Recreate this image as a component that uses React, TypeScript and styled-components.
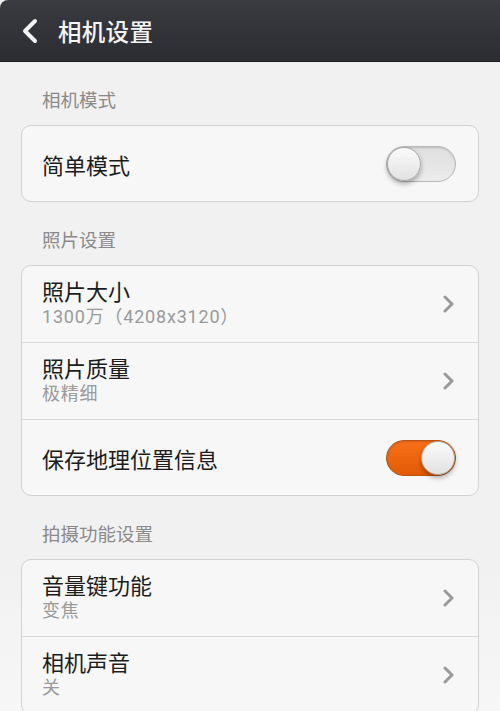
import React from "react";
import styled, { createGlobalStyle } from "styled-components";

const Global = createGlobalStyle`
  html, body { margin: 0; padding: 0; background: #f1f1f1; }
  body { font-family: "Noto Sans CJK SC", "Noto Sans", sans-serif; }
  * { box-sizing: border-box; }
`;

const Page = styled.div`
  width: 500px;
  height: 711px;
  overflow: hidden;
  background: linear-gradient(#f1f1f1 0%, #f1f1f1 80%, #f7f7f7 100%);
  display: flex;
  flex-direction: column;
`;

const Header = styled.div`
  height: 62px;
  flex: none;
  display: flex;
  align-items: center;
  gap: 18px;
  padding-left: 20px;
  background: linear-gradient(#3a3b41, #2c2d32);
  border-top-left-radius: 8px;
  border-bottom: 1px solid #1c1c1f;
`;

const Title = styled.div`
  color: #f4f4f4;
  font-size: 23.5px;
  font-weight: 500;
  letter-spacing: 0.3px;
`;

const Content = styled.div`
  display: flex;
  flex-direction: column;
  padding: 0 21px;
`;

const SectionLabel = styled.div`
  color: #8a8a8a;
  font-size: 18.5px;
  height: 63px;
  padding: 25px 0 0 21px;
  line-height: 24px;
`;

const Card = styled.div`
  background: #f7f7f7;
  border: 1px solid #d2d2d2;
  border-radius: 10px;
  display: flex;
  flex-direction: column;
`;

const Row = styled.div<{ $last?: boolean; $h?: number }>`
  height: ${(p) => p.$h ?? 77}px;
  display: flex;
  align-items: center;
  justify-content: space-between;
  padding: 0 20px 0 20px;
  border-bottom: ${(p) => (p.$last ? "none" : "1px solid #dadada")};
`;

const Texts = styled.div`
  display: flex;
  flex-direction: column;
  margin-top: -2px;
`;

const RowTitle = styled.div`
  color: #1c1c1c;
  font-size: 22px;
  line-height: 28px;
`;

const RowSub = styled.div`
  color: #9a9a9a;
  font-family: Roboto, "Noto Sans CJK SC", sans-serif;
  font-size: 18px;
  line-height: 26px;
  letter-spacing: 0.8px;
`;

const Track = styled.div<{ $on?: boolean }>`
  width: 70px;
  height: 36px;
  border-radius: 18px;
  position: relative;
  margin-right: 2px;
  background: ${(p) =>
    p.$on ? "linear-gradient(#f8701a, #e25a05)" : "linear-gradient(#dedede, #ececec)"};
  border: 1px solid ${(p) => (p.$on ? "#b9540e" : "#b8b8b8")};
  box-shadow: inset 0 1px 2px rgba(0, 0, 0, 0.15);
`;

const Knob = styled.div<{ $on?: boolean }>`
  position: absolute;
  top: 0px;
  ${(p) => (p.$on ? "right: 0px;" : "left: 0px;")}
  width: 34px;
  height: 34px;
  border-radius: 50%;
  background: linear-gradient(#fafafa, #e2e2e2);
  border: 1px solid #a8a8a8;
  box-shadow: 0 3px 5px rgba(0, 0, 0, 0.3);
`;

const Chevron = () => (
  <svg width="14" height="18" viewBox="0 0 14 18" style={{ marginRight: 2 }}>
    <path d="M3 2 L10 9 L3 16" fill="none" stroke="#9a9a9a" strokeWidth="3" strokeLinecap="round" strokeLinejoin="round" />
  </svg>
);

const Back = () => (
  <svg width="20" height="26" viewBox="0 0 20 26">
    <path d="M15 3 L5 13 L15 23" fill="none" stroke="#f2f2f2" strokeWidth="4" strokeLinecap="round" strokeLinejoin="round" />
  </svg>
);

const Switch = ({ on }: { on?: boolean }) => (
  <Track $on={on}>
    <Knob $on={on} />
  </Track>
);

export default function App() {
  return (
    <Page>
      <Global />
      <Header>
        <Back />
        <Title>相机设置</Title>
      </Header>
      <Content>
        <SectionLabel>相机模式</SectionLabel>
        <Card>
          <Row $last $h={75}>
            <RowTitle>简单模式</RowTitle>
            <Switch />
          </Row>
        </Card>
        <SectionLabel>照片设置</SectionLabel>
        <Card>
          <Row>
            <Texts>
              <RowTitle>照片大小</RowTitle>
              <RowSub>1300万（4208x3120）</RowSub>
            </Texts>
            <Chevron />
          </Row>
          <Row>
            <Texts>
              <RowTitle>照片质量</RowTitle>
              <RowSub>极精细</RowSub>
            </Texts>
            <Chevron />
          </Row>
          <Row $last $h={75}>
            <RowTitle>保存地理位置信息</RowTitle>
            <Switch on />
          </Row>
        </Card>
        <SectionLabel>拍摄功能设置</SectionLabel>
        <Card>
          <Row>
            <Texts>
              <RowTitle>音量键功能</RowTitle>
              <RowSub>变焦</RowSub>
            </Texts>
            <Chevron />
          </Row>
          <Row>
            <Texts>
              <RowTitle>相机声音</RowTitle>
              <RowSub>关</RowSub>
            </Texts>
            <Chevron />
          </Row>
        </Card>
      </Content>
    </Page>
  );
}
